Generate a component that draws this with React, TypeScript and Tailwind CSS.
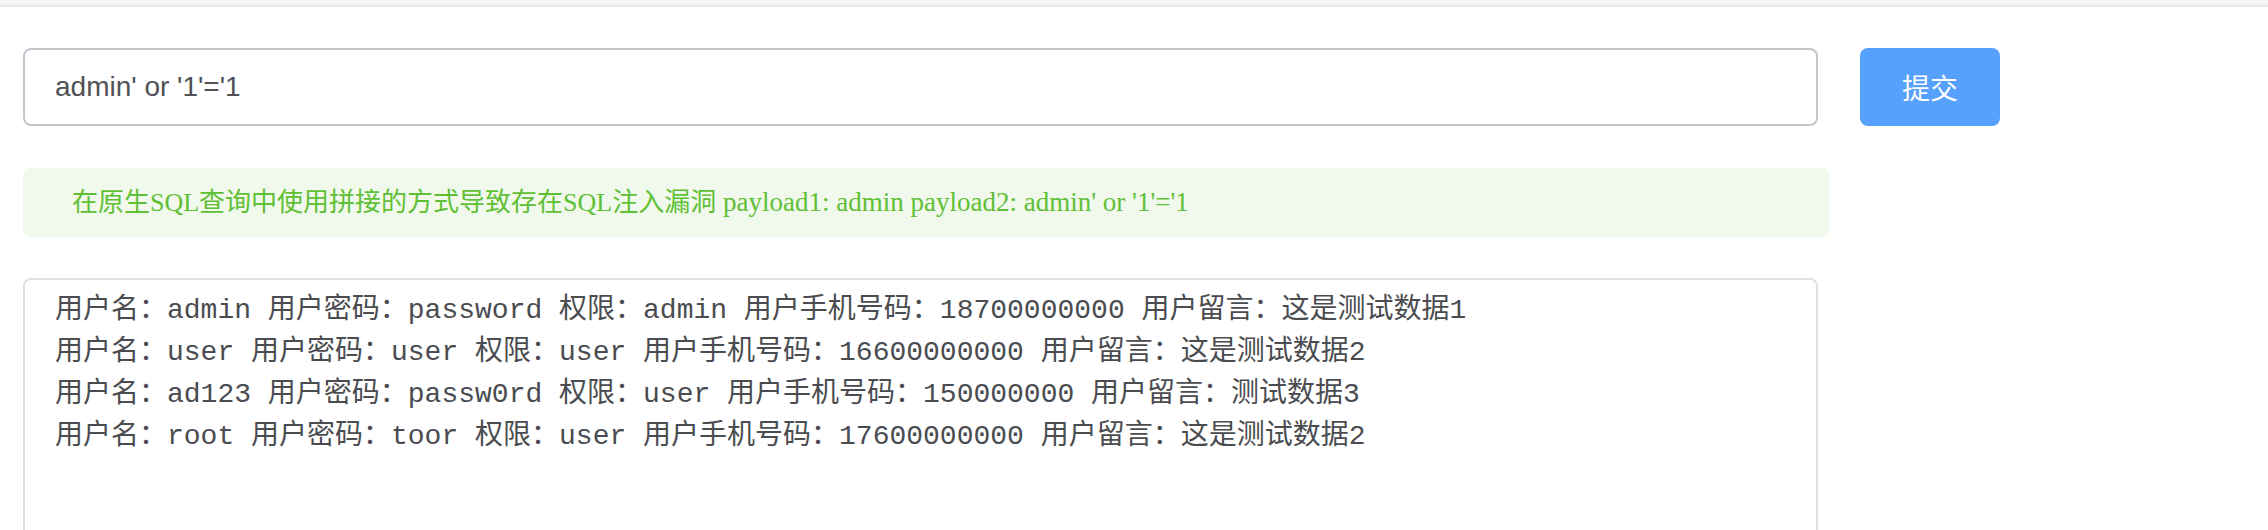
import React from "react"

const rows = [
  "用户名：admin 用户密码：password 权限：admin 用户手机号码：18700000000 用户留言：这是测试数据1",
  "用户名：user 用户密码：user 权限：user 用户手机号码：16600000000 用户留言：这是测试数据2",
  "用户名：ad123 用户密码：passw0rd 权限：user 用户手机号码：150000000 用户留言：测试数据3",
  "用户名：root 用户密码：toor 权限：user 用户手机号码：17600000000 用户留言：这是测试数据2",
]

export default function App() {
  return (
    <div className="h-[530px] w-full overflow-hidden bg-white">
      <div className="h-[7px] border-b-2 border-[#e7e9f0] bg-gradient-to-b from-[#f9f9f9] to-[#f1f1f3]" />

      <div className="pl-[23px] pt-[41px]">
        <div className="flex items-center">
          <input
            className="h-[78px] w-[1795px] rounded-[8px] border-2 border-[#c3c6cd] px-[30px] text-[28px] text-[#505256] outline-none"
            style={{ fontFamily: '"Liberation Sans", Arial, sans-serif' }}
            defaultValue="admin' or '1'='1"
          />
          <button
            className="ml-[42px] h-[78px] w-[140px] rounded-[8px] bg-[#56a1fe] text-[28px] text-white"
            style={{ fontFamily: '"Noto Sans CJK SC", sans-serif' }}
          >
            提交
          </button>
        </div>

        <div
          className="mt-[42px] flex h-[69px] w-[1807px] items-center rounded-[8px] bg-[#f0f9eb] pl-[49px] text-[26px] text-[#5fbf35]"
          style={{ fontFamily: '"Liberation Serif", "Noto Sans CJK SC", serif' }}
        >
          <span className="whitespace-pre">
            在原生SQL查询中使用拼接的方式导致存在SQL注入漏洞
            <span className="text-[27px]"> payload1: admin payload2: admin' or '1'='1</span>
          </span>
        </div>

        <textarea
          readOnly
          className="mt-[41px] block h-[300px] w-[1795px] resize-none rounded-[8px] border-2 border-[#dcdfe6] px-[30px] py-[10px] text-[28px] leading-[42px] text-[#4a4c50] outline-none"
          style={{ fontFamily: '"Liberation Mono", "Noto Sans CJK SC", monospace' }}
          defaultValue={rows.join("\n")}
        />
      </div>
    </div>
  )
}
